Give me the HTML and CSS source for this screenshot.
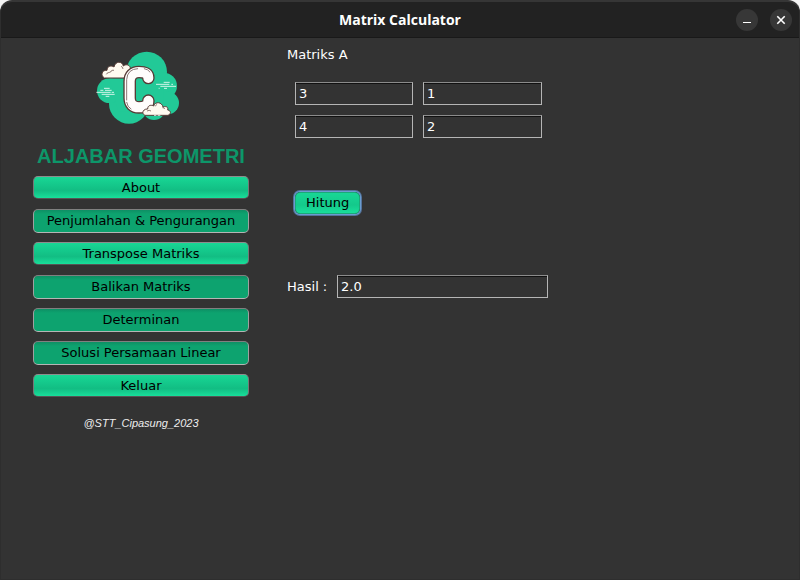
FILE: index.html
```html
<!DOCTYPE html>
<html lang="id">
<head>
<meta charset="utf-8">
<title>Matrix Calculator</title>
<link rel="stylesheet" href="styles.css">
</head>
<body>
<div class="window">
  <header class="titlebar">
    <h1 class="title">Matrix Calculator</h1>
    <div class="window-controls">
      <button class="control" type="button" aria-label="Minimize"><svg width="22" height="22" viewBox="0 0 22 22"><path d="M7 13.5h8" stroke="#fff" fill="none"/></svg></button>
      <button class="control" type="button" aria-label="Close"><svg width="22" height="22" viewBox="0 0 22 22"><path d="M7.3 7.3l7.4 7.4M14.7 7.3l-7.4 7.4" stroke="#fff" stroke-width="1.6" fill="none"/></svg></button>
    </div>
  </header>
  <div class="content">
    <aside class="sidebar">
      <svg class="logo" viewBox="33 27 249 219" aria-hidden="true">
        <g fill="#22c997">
          <circle cx="185" cy="90" r="61"/>
          <circle cx="236" cy="132" r="40"/>
          <circle cx="248" cy="183" r="34"/>
          <circle cx="132" cy="185" r="60"/>
          <circle cx="73" cy="146" r="37"/>
          <circle cx="207" cy="200" r="34"/>
          <path d="M73 109h70l50-30 43 60v70H100z"/>
        </g>
        <path d="M58 108c-12-7-8-25 8-23 0-13 14-16 21-10 4-19 25-18 28-3 10-8 21-2 21 7v29z" fill="#fffaf0" stroke="#573b36" stroke-width="3"/>
        <path d="M64 97c2-6 9-5 13-7 1-5 6-6 10-5M108 73q6 2 6 8" fill="none" stroke="#573b36" stroke-width="2"/>
        <g fill="none" stroke-linecap="round">
          <path d="M190 108C190 94 178 90 162 90C144 90 134 100 134 118V168C134 186 144 196 162 196C180 196 190 190 190 176" stroke="#573b36" stroke-width="38"/>
          <path d="M190 108C190 94 178 90 162 90C144 90 134 100 134 118V168C134 186 144 196 162 196C180 196 190 190 190 176" stroke="#fffdfc" stroke-width="30"/>
          <path d="M125 174V113Q127 81 158 80M178 80q12 2 17 10M125 181q2 14 13 20" stroke="#8b7876" stroke-width="3"/>
        </g>
        <path d="M180 220c-12-5-6-20 8-19 0-12 11-13 18-9 5-15 25-12 28 3 12-4 16 2 14 9 11 2 11 12 1 16z" fill="#fffaf0" stroke="#573b36" stroke-width="3"/>
        <path d="M186 207q7-4 12 0M211 193l4-6M232 197q6-1 7 4" fill="none" stroke="#573b36" stroke-width="2"/>
        <path d="M34 151h43M80 151h7M50 157h39M46 145h9M60 145h20M57 139h17M62 163h11M213 127h40M226 133h47M236 121h18M221 139h3M237 139h9M259 127h5M207 220h7M218 220h8" fill="none" stroke="#fff" stroke-width="2.4"/>
      </svg>
      <h2 class="brand">ALJABAR GEOMETRI</h2>
      <nav class="menu">
        <button class="btn" type="button">About</button>
        <button class="btn pressed" type="button">Penjumlahan &amp; Pengurangan</button>
        <button class="btn" type="button">Transpose Matriks</button>
        <button class="btn pressed" type="button">Balikan Matriks</button>
        <button class="btn pressed" type="button">Determinan</button>
        <button class="btn pressed" type="button">Solusi Persamaan Linear</button>
        <button class="btn" type="button">Keluar</button>
      </nav>
      <p class="credit">@STT_Cipasung_2023</p>
    </aside>
    <main class="panel">
      <h3 class="label">Matriks A</h3>
      <div class="matrix">
        <input class="field" type="text" value="3" aria-label="Baris 1 kolom 1">
        <input class="field" type="text" value="1" aria-label="Baris 1 kolom 2">
        <input class="field" type="text" value="4" aria-label="Baris 2 kolom 1">
        <input class="field" type="text" value="2" aria-label="Baris 2 kolom 2">
      </div>
      <button class="btn calculate" type="button">Hitung</button>
      <div class="result">
        <label class="label" for="hasil">Hasil :</label>
        <input class="field" id="hasil" type="text" value="2.0">
      </div>
    </main>
  </div>
</div>
</body>
</html>
```
FILE: styles.css
```css
* { box-sizing: border-box; }

body {
  margin: 0;
  background: #f2f2f2;
  color: #fff;
  font: 13px/16px "DejaVu Sans", sans-serif;
}

h1, h2, h3, p { margin: 0; }

button, input { font: inherit; }

.window {
  display: flex;
  flex-direction: column;
  min-height: 100vh;
  overflow: hidden;
  background: #333;
  border: 1px solid #2e2e2e;
  border-top: 2px solid #363636;
  border-radius: 12px 12px 0 0;
}

.titlebar {
  display: grid;
  grid-template-columns: 1fr auto 1fr;
  align-items: center;
  height: 36px;
  padding: 0 7px;
  background: #222;
  border-bottom: 1px solid #191919;
}

.title {
  grid-column: 2;
  font: bold 14px/20px "Open Sans", "Noto Sans", sans-serif;
}

.window-controls {
  display: flex;
  justify-content: flex-end;
  gap: 12px;
}

.control {
  display: flex;
  width: 22px;
  height: 22px;
  padding: 0;
  border: 0;
  border-radius: 50%;
  background: #373737;
}

.content {
  display: flex;
  flex: 1;
  gap: 38px;
  padding: 0 32px;
}

.sidebar {
  display: flex;
  flex-direction: column;
  align-items: center;
  width: 216px;
  padding-top: 13px;
}

.logo {
  width: 83px;
  height: 73px;
  margin-right: 8px;
}

.brand {
  margin-top: 20px;
  color: #0d9669;
  font: bold 20px/24px "Liberation Sans", sans-serif;
  white-space: nowrap;
}

.menu {
  display: grid;
  grid-auto-rows: 24px;
  gap: 9px;
  width: 100%;
  margin-top: 8px;
}

.btn {
  height: 23px;
  padding: 0 12px;
  border: 1px solid #777;
  border-top-color: #8d8d8d;
  border-bottom-color: #555;
  border-radius: 5px;
  background: linear-gradient(#18d795, #12bd83 65%, #18df9a);
  color: #000;
  line-height: 20px;
}

.pressed {
  height: 24px;
  border-color: #808080 #a0a0a0 #b5b5b5;
  background: linear-gradient(#0e8f64, #0da36f 4px);
}

.credit {
  margin-top: 17px;
  color: #eee;
  font: italic 11px/16px "Liberation Sans", sans-serif;
}

.panel {
  flex: 1;
  padding-top: 9px;
}

.label {
  font: inherit;
  white-space: nowrap;
}

.matrix {
  display: grid;
  grid-template-columns: 118px 119px;
  gap: 10px;
  margin: 19px 0 0 8px;
}

.field {
  width: 100%;
  height: 23px;
  padding: 0 3px;
  border: 1px solid #b5b5b5;
  border-top-color: #8c8c8c;
  background: #333;
  box-shadow: inset 0 1px #111;
  color: #fff;
}

.calculate {
  display: block;
  height: 22px;
  margin: 54px 0 0 8px;
  padding: 0 10px;
  border: 1px solid #1ba878;
  background: linear-gradient(#18d795, #14c98b 60%, #18df9a);
  box-shadow: 0 0 0 1px #6b9bd0, 0 0 0 2px #53739a;
}

.result {
  display: grid;
  grid-template-columns: 38px 211px;
  align-items: center;
  gap: 12px;
  margin-top: 61px;
}
```
